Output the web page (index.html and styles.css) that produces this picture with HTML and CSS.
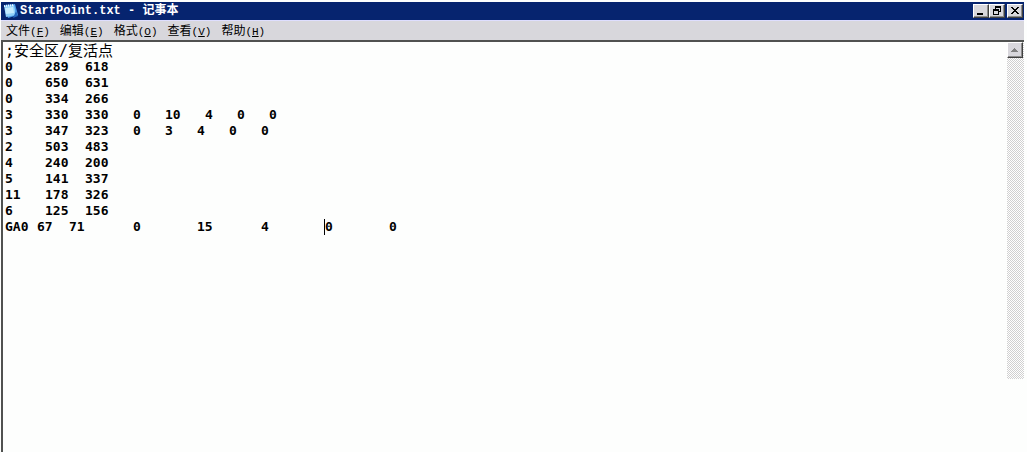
FILE: index.html
```html
<!DOCTYPE html>
<html lang="zh-CN">
<head>
<meta charset="utf-8">
<title>StartPoint.txt - 记事本</title>
<link rel="stylesheet" href="styles.css">
</head>
<body>
<div class="window">
  <header class="titlebar">
    <svg class="app-icon" viewBox="0 0 16 16" aria-hidden="true">
      <path d="M2 2l10-1 3 11-10 3z" fill="#4c9ae6"/>
      <path d="M1 3l10-1 2 10-10 2z" fill="#8fd0fa"/>
      <path d="M2 5l8-1 1 6-8 1z" fill="#c5ecff"/>
      <path d="M1 3l10-1" stroke="#eef8ff" stroke-width="2" stroke-dasharray="1 1"/>
      <path d="M13 8l2 5-5 2z" fill="#2467bd"/>
    </svg>
    <h1 class="title">StartPoint.txt - <span class="title-cjk">记事本</span></h1>
    <div class="controls">
      <button class="control" type="button" aria-label="最小化"><svg viewBox="0 0 12 10"><path d="M2 7h6v2H2z"/></svg></button>
      <button class="control" type="button" aria-label="还原"><svg viewBox="0 0 12 10"><path fill-rule="evenodd" d="M4 0h6v6H8v3H2V3h2zM5 2v1h3v2h1V2zM3 5v3h4V5z"/></svg></button>
      <button class="control control-close" type="button" aria-label="关闭"><svg viewBox="0 0 12 10"><path d="M2 1h2v1h1v1h2V2h1V1h2v1H9v1H8v1H7v1h1v1h1v1h1v1H8V7H7V6H5v1H4v1H2V7h1V6h1V5h1V4H4V3H3V2H2z"/></svg></button>
    </div>
  </header>
  <nav class="menubar">
    <button class="menu" type="button">文件<span class="key">(<u>F</u>)</span></button>
    <button class="menu" type="button">编辑<span class="key">(<u>E</u>)</span></button>
    <button class="menu" type="button">格式<span class="key">(<u>O</u>)</span></button>
    <button class="menu" type="button">查看<span class="key">(<u>V</u>)</span></button>
    <button class="menu" type="button">帮助<span class="key">(<u>H</u>)</span></button>
  </nav>
  <main class="editor">
    <textarea class="text" aria-label="文本" spellcheck="false" wrap="off">;安全区/复活点
0&#9;&#9;&#9;&#9;289&#9;&#9;618
0&#9;&#9;&#9;&#9;650&#9;&#9;631
0&#9;&#9;&#9;&#9;334&#9;&#9;266
3&#9;&#9;&#9;&#9;330&#9;&#9;330&#9;&#9;&#9;0&#9;&#9;&#9;10&#9;&#9;&#9;4&#9;&#9;&#9;0&#9;&#9;&#9;0
3&#9;&#9;&#9;&#9;347&#9;&#9;323&#9;&#9;&#9;0&#9;&#9;&#9;3&#9;&#9;&#9;4&#9;&#9;&#9;0&#9;&#9;&#9;0
2&#9;&#9;&#9;&#9;503&#9;&#9;483
4&#9;&#9;&#9;&#9;240&#9;&#9;200
5&#9;&#9;&#9;&#9;141&#9;&#9;337
11&#9;&#9;&#9;178&#9;&#9;326
6&#9;&#9;&#9;&#9;125&#9;&#9;156
GA0&#9;67&#9;&#9;71&#9;&#9;&#9;&#9;&#9;&#9;0&#9;&#9;&#9;&#9;&#9;&#9;&#9;15&#9;&#9;&#9;&#9;&#9;&#9;4&#9;&#9;&#9;&#9;&#9;&#9;&#9;0&#9;&#9;&#9;&#9;&#9;&#9;&#9;0</textarea>
    <span class="caret"></span>
    <div class="scrollbar">
      <button class="scroll-up" type="button" aria-label="向上滚动"><svg viewBox="0 0 12 12"><path d="M5 4h1v1h1v1h1v1h1v1H2V7h1V6h1V5h1z"/></svg></button>
    </div>
  </main>
</div>
</body>
</html>
```
FILE: styles.css
```css
* { box-sizing: border-box; }

body {
  margin: 0;
  background: #fdfefd;
  color: #000;
}

button {
  margin: 0;
  padding: 0;
  border: 0;
  color: inherit;
}

.window {
  display: flex;
  flex-direction: column;
  min-height: 100vh;
  padding: 2px 3px 0 1px;
}

.titlebar {
  display: flex;
  align-items: center;
  height: 18px;
  padding: 0 1px 0 2px;
  background: #06246f;
}

.app-icon {
  width: 16px;
  height: 16px;
}

.title {
  flex: 1;
  margin: 0 0 0 1px;
  color: #fff;
  font: bold 12px/18px "Liberation Mono", "Noto Sans CJK SC", monospace;
  white-space: pre;
}

.title-cjk { font-size: 12px; }

.controls { display: flex; }

.control,
.scroll-up {
  display: flex;
  background: #d8d7dc;
  border: 1px solid;
  border-color: #fff #404040 #404040 #fff;
  box-shadow: inset -1px -1px #8c8c8c;
}

.control {
  width: 16px;
  height: 14px;
  padding: 1px;
}

.control svg {
  width: 12px;
  height: 10px;
}

.control-close { margin-left: 2px; }

.menubar {
  display: flex;
  gap: 10px;
  height: 20px;
  padding: 0 5px;
  border-top: 1px solid #dedeff;
  background: #d8d7dc;
}

.menu {
  background: none;
  font: 12px/18px "Noto Sans CJK SC", sans-serif;
  white-space: nowrap;
}

.key { font: 11px/18px "Liberation Mono", monospace; }

.editor {
  position: relative;
  display: flex;
  flex: 1;
  border-top: 2px solid #505250;
  border-left: 2px solid #505250;
}

.text {
  flex: 1;
  min-width: 0;
  padding: 1px 2px;
  border: 0;
  outline: 0;
  resize: none;
  overflow: hidden;
  background: transparent;
  color: #000;
  font: bold 13px/16px "DejaVu Sans Mono", "Noto Sans CJK SC", monospace;
  tab-size: 8px;
}

.text::first-line {
  font-size: 15px;
  font-weight: normal;
}

.caret {
  position: absolute;
  top: 177px;
  left: 321px;
  width: 1px;
  height: 16px;
  background: #000;
}

.scrollbar {
  width: 17px;
  margin-bottom: 73px;
  background: repeating-conic-gradient(#d0d0d0 0 25%, #fff 0 50%) 0 0 / 2px 2px;
}

.scroll-up {
  width: 16px;
  height: 16px;
  padding: 1px;
}

.scroll-up svg {
  width: 12px;
  height: 12px;
  fill: #808080;
}
```
